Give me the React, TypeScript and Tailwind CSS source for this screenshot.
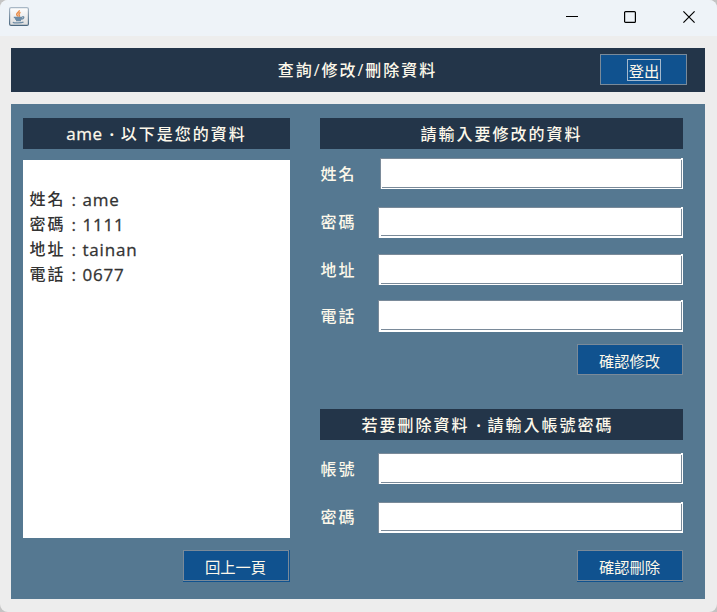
import type { ReactNode } from 'react';

const sans = "font-['Open_Sans','Noto_Sans_CJK_TC',sans-serif]";

function Heading({ children, className = '' }: { children: ReactNode; className?: string }) {
  return (
    <h2 className={`flex h-[31px] shrink-0 items-center justify-center bg-[#233549] text-base font-medium leading-6 tracking-[2px] text-[#fdf8ea] ${className}`}>
      {children}
    </h2>
  );
}

function Dot() {
  return <span className="inline-flex w-[18px] justify-center pt-px font-bold tracking-normal">·</span>;
}

function Field({ label, row, box, text = 'pt-[3px]', inner = 'ml-[2px] mb-[2px]' }: { label: string; row: string; box: string; text?: string; inner?: string }) {
  return (
    <label className={`flex items-start justify-between ${row}`}>
      <span className={`pl-[0.500px] text-base font-medium leading-6 tracking-[2px] text-[#fdf8ea] ${text}`}>{label}</span>
      <span className={`relative flex border-l border-t border-[#7a8a99] bg-white ${box}`}>
        <input className={`min-w-0 flex-1 mr-px mt-px border-b border-r border-[#7a8a99] bg-white outline-none ${inner}`} />
        <span className="absolute -top-px right-0 h-[2px] w-[2px] bg-white" />
      </span>
    </label>
  );
}

function Entry({ name, value }: { name: string; value: string }) {
  return (
    <p className="flex h-[25px]">
      <span className="w-9 tracking-[2px]">{name}</span>
      <span className="w-[17px] pl-[6px] text-[17px] [-webkit-text-stroke:0.300px]">:</span>
      <span className="text-[17px] tracking-[0.800px] [-webkit-text-stroke:0.300px]">{value}</span>
    </p>
  );
}

function Button({ children, className = '' }: { children: ReactNode; className?: string }) {
  return (
    <button className={`flex h-[31px] w-[106px] items-center justify-center border border-[#7a8a99] bg-[#10528f] pr-px pt-[3px] text-[15.300px] leading-5 text-[#fdf8ea] ${className}`}>
      {children}
    </button>
  );
}

function JavaIcon() {
  return (
    <svg width="20" height="20" viewBox="0 0 20 20" fill="none">
      <defs>
        <linearGradient id="frame" x1="0" y1="0" x2="0" y2="1">
          <stop offset="0" stopColor="#a9b8c6" />
          <stop offset="1" stopColor="#4b6880" />
        </linearGradient>
        <linearGradient id="face" x1="0" y1="0" x2="0" y2="1">
          <stop offset="0" stopColor="#ffffff" />
          <stop offset="1" stopColor="#dddddd" />
        </linearGradient>
      </defs>
      <rect x="0.6" y="0.6" width="18.8" height="17.8" rx="1.5" fill="url(#face)" stroke="url(#frame)" strokeWidth="1.2" />
      <path d="M10.300 3.200c.5 1.600-2.800 2.400-2.600 4.200.1 1 1 1.400 1.200 2.100M11.500 5.400c-1.700.9-1.900 1.700-1.300 2.500.5.700.3 1.200-.3 1.800" stroke="#ea8c48" strokeWidth="1.500" />
      <path d="M4.800 10.500h8.400M6 12h7M7 13.500h5M13.300 9.800c2.200-.5 1.800 1.900-.3 2.300M3.800 15.400c2 .8 8.300.7 10.700-.2" stroke="#6d8ca6" strokeWidth="1.300" />
    </svg>
  );
}

export default function App() {
  return (
    <div className="h-[612px] w-[717px] bg-[#c4c4c4]">
      <main className={`flex h-full flex-col overflow-hidden rounded-lg bg-[#ededed] ${sans}`}>
        <header className="flex h-9 shrink-0 items-start justify-between bg-[#eef3f8] pl-[9px] pr-[22px] pt-[7px]">
          <JavaIcon />
          <div className="flex gap-[46px] pt-[4px] text-black">
            <svg width="12" height="12" viewBox="0 0 12 12" stroke="currentColor"><path d="M0 5.500h12" /></svg>
            <svg className="mr-px" width="12" height="12" viewBox="0 0 12 12" fill="none" stroke="currentColor" strokeWidth="1.200"><rect x=".6" y=".6" width="10.800" height="10.800" rx="1" /></svg>
            <svg width="12" height="12" viewBox="0 0 12 12" stroke="currentColor" strokeWidth="1.200"><path d="M.4.4l11.200 11.200M11.600.4L.4 11.600" /></svg>
          </div>
        </header>

        <section className="ml-[11px] mr-3 mt-3 grid h-11 shrink-0 grid-cols-[1fr_auto_1fr] items-center bg-[#233549]">
          <h1 className="col-start-2 pr-px text-base font-medium leading-6 tracking-[2px] text-[#fdf8ea]">查詢/修改/刪除資料</h1>
          <button className="mr-[18px] mt-[6px] flex h-[31px] w-[87px] items-center justify-center self-start justify-self-end border border-[#7a8a99] bg-[#10528f] text-[15.300px] text-[#fdf8ea]">
            <span className="flex h-[22px] w-[34px] items-center justify-center border border-[#a4b9cd] pl-px pt-[3px] leading-5">登出</span>
          </button>
        </section>

        <section className="ml-[11px] mr-3 mt-3 flex h-[495px] shrink-0 bg-[#557891] pl-3 pr-[22px] pt-[14px]">
          <div className="flex w-[267px] flex-col">
            <Heading><span className="text-[17px] tracking-[0.600px] [-webkit-text-stroke:0.300px]">ame</span><Dot />以下是您的資料</Heading>
            <div className="mt-[11px] h-[378px] bg-white pl-[6.500px] pt-[27px] text-base font-medium leading-[25px] text-[#333]">
              <Entry name="姓名" value="ame" />
              <Entry name="密碼" value="1111" />
              <Entry name="地址" value="tainan" />
              <Entry name="電話" value="0677" />
            </div>
            <div className="mt-3 h-8 w-[107px] self-end bg-[#10528f]"><Button>回上一頁</Button></div>
          </div>

          <div className="ml-[30px] flex w-[363px] flex-col">
            <Heading>請輸入要修改的資料</Heading>
            <Field label="姓名" row="mt-[9px]" box="h-[31px] w-[303px]" text="pt-[4px]" inner="ml-px mb-px" />
            <Field label="密碼" row="mt-[18px]" box="h-[31px] w-[305px]" />
            <Field label="地址" row="mt-[16px]" box="h-[31px] w-[305px]" text="pt-[4px]" inner="ml-[2px] mb-px" />
            <Field label="電話" row="mt-[15px]" box="h-[32px] w-[305px]" text="pt-[4px]" />
            <Button className="mt-3 self-end">確認修改</Button>
            <Heading className="mt-[34px] pr-[28px]">若要刪除資料<Dot />請輸入帳號密碼</Heading>
            <Field label="帳號" row="mt-[13px]" box="h-[31px] w-[305px]" text="pt-[4px]" inner="ml-[2px] mb-px" />
            <Field label="密碼" row="mt-[18px]" box="h-[31px] w-[305px]" />
            <div className="mt-[17px] h-8 self-end bg-[#10528f]"><Button>確認刪除</Button></div>
          </div>
        </section>
      </main>
    </div>
  );
}
